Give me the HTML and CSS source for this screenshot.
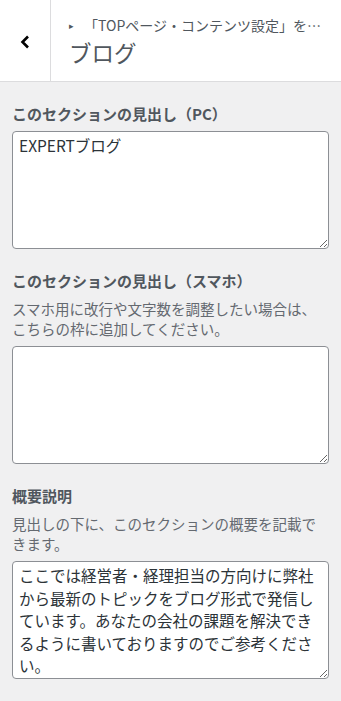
FILE: index.html
```html
<!DOCTYPE html>
<html lang="ja">

<head>
    <meta charset="utf-8">
    <title>ブログ</title>
    <link rel="stylesheet" href="styles.css">
</head>

<body>
    <div class="panel-head">
        <button class="back" type="button" aria-label="戻る">
            <svg width="12" height="14" viewBox="0 0 12 14">
                <path d="M9 1.5 L3.5 7 L9 12.5" fill="none" stroke="#000" stroke-width="2.6"/>
            </svg>
        </button>
        <div class="head-titles">
            <div class="crumb"><span class="crumb-arrow">▸</span>「TOPページ・コンテンツ設定」を…</div>
            <h2 class="panel-title">ブログ</h2>
        </div>
    </div>

    <div class="controls">
        <div class="control">
            <label class="control-label">このセクションの見出し（PC）</label>
            <textarea class="control-input">EXPERTブログ</textarea>
        </div>

        <div class="control">
            <label class="control-label">このセクションの見出し（スマホ）</label>
            <p class="control-desc">スマホ用に改行や文字数を調整したい場合は、こちらの枠に追加してください。</p>
            <textarea class="control-input"></textarea>
        </div>

        <div class="control">
            <label class="control-label">概要説明</label>
            <p class="control-desc">見出しの下に、このセクションの概要を記載できます。</p>
            <textarea class="control-input">ここでは経営者・経理担当の方向けに弊社から最新のトピックをブログ形式で発信しています。あなたの会社の課題を解決できるように書いておりますのでご参考ください。</textarea>
        </div>
    </div>
</body>

</html>
```

FILE: styles.css
```css
body {
    margin: 0;
    background: #f0f0f1;
    font-family: "Noto Sans CJK JP", "Noto Sans", sans-serif;
    color: #50575e;
}

.panel-head {
    display: flex;
    height: 81px;
    background: #fff;
    border-bottom: 1px solid #dcdcde;
}

.back {
    width: 51px;
    flex-shrink: 0;
    display: flex;
    align-items: center;
    justify-content: center;
    padding: 2px 0 0;
    background: #fff;
    border: 0;
    border-right: 1px solid #dcdcde;
}

.head-titles {
    padding: 15px 0 0 18px;
    min-width: 0;
}

.crumb {
    font-size: 14px;
    line-height: 20px;
    color: #50575e;
    white-space: nowrap;
}

.crumb-arrow {
    font-size: 9px;
    margin-right: 10px;
    vertical-align: 2px;
}

.panel-title {
    margin: 0;
    font-size: 22.5px;
    line-height: 32px;
    font-weight: 400;
    color: #50575e;
}

.controls {
    padding: 22px 12px 12px;
}

.control {
    margin-bottom: 22px;
}

.control-label {
    display: block;
    font-size: 15px;
    line-height: 20px;
    font-weight: 700;
    color: #50575e;
}

.control-desc {
    margin: 8px 0 0;
    font-size: 14.5px;
    line-height: 20px;
    color: #646970;
}

.control-input {
    display: block;
    box-sizing: border-box;
    width: 100%;
    height: 118px;
    margin-top: 7px;
    padding: 2px 6px;
    border: 1px solid #8c8f94;
    border-radius: 4px;
    background: #fff;
    font-family: "Noto Sans CJK JP", "Noto Sans", sans-serif;
    font-size: 15.5px;
    line-height: 22.5px;
    color: #2c3338;
    overflow: hidden;
}
```
